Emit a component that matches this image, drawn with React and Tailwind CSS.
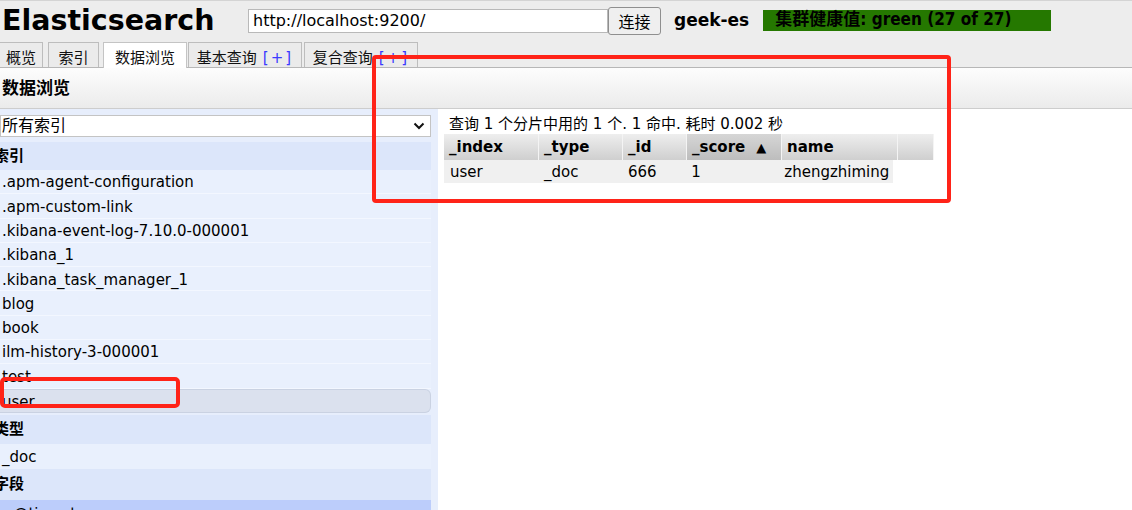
import React from 'react';

const indices = [
    '.apm-agent-configuration',
    '.apm-custom-link',
    '.kibana-event-log-7.10.0-000001',
    '.kibana_1',
    '.kibana_task_manager_1',
    'blog',
    'book',
    'ilm-history-3-000001',
    'test',
];

const tabs = [
    { label: '概览', w: 'w-[43px]', ml: '' },
    { label: '索引', w: 'w-[51px]', ml: 'ml-[5px]' },
    { label: '数据浏览', w: 'w-[84px]', ml: 'ml-[4px]', active: true },
    { label: '基本查询', w: 'w-[114px]', ml: 'ml-[1px]', plus: true },
    { label: '复合查询', w: 'w-[114px]', ml: 'ml-[2px]', plus: true },
];

const columns = [
    { label: '_index', w: 'w-[95px]', pl: 'pl-[6px]' },
    { label: '_type', w: 'w-[84px]', pl: 'pl-[6px]' },
    { label: '_id', w: 'w-[64px]', pl: 'pl-[7px]' },
    { label: '_score', w: 'w-[95px]', pl: 'pl-[7px]', sorted: true },
    { label: 'name', w: 'w-[116px]', pl: 'pl-[6px]' },
    { label: '', w: 'w-[36px]', pl: 'pl-[6px]' },
];

const row = ['user', '_doc', '666', '1', 'zhengzhiming'];

const SectionHeader = ({ children, h }) => (
    <div className={`${h} flex items-center bg-[#dce6fa] -ml-[6px] text-[15px] font-bold text-black`}>
        {children}
    </div>
);

const App = () => {
    return (
        <div className="relative w-[1132px] h-[510px] overflow-hidden bg-white font-['DejaVu_Sans','Noto_Sans_CJK_SC',sans-serif] text-[15px] text-[#111]">
            {/* top bar */}
            <div className="h-[42px] bg-[#ededed] border-t border-[#d4d4d4] flex items-center">
                <div className="pl-[2px] w-[248px] text-[28.5px] font-bold text-black leading-none">
                    Elasticsearch
                </div>
                <div className="w-[360px] h-[24px] bg-white border border-[#b9b9b9] flex items-center pl-[4px] text-[16px] text-black -mt-[2px]">
                    http://localhost:9200/
                </div>
                <button className="w-[53px] h-[28px] bg-[#efefef] border border-[#8f8f8f] rounded-[3px] text-[16px] text-black font-['Noto_Sans_CJK_SC',sans-serif] -mt-[2px]">
                    连接
                </button>
                <div className="ml-[13px] text-[17px] font-bold text-black -mt-[2px]">geek-es</div>
                <div className="ml-[14px] w-[288px] h-[21px] bg-[#257800] flex items-center pl-[12px] text-[17px] font-bold text-black -mt-[3px] font-['DejaVu_Sans_Condensed','Noto_Sans_CJK_SC',sans-serif]">
                    集群健康值: green (27 of 27)
                </div>
            </div>

            {/* tabs */}
            <div className="h-[26px] bg-[#ededed] border-b border-[#b7b7b7] flex items-end">
                {tabs.map((t) => (
                    <div
                        key={t.label}
                        className={`${t.w} ${t.ml} h-[25px] flex items-center justify-center border border-b-0 text-[15px] ${
                            t.active
                                ? 'bg-white border-[#c4c4c4] h-[26px] -mb-[1px]'
                                : 'bg-[#ebebeb] border-[#bdbdbd]'
                        } ${t.label === '概览' ? 'border-l-0' : ''}`}
                    >
                        <span className="pt-[6px]">{t.label}</span>
                        {t.plus && <span className="ml-[6px] pt-[6px] text-[#3a3aff] tracking-[2px]">[+]</span>}
                    </div>
                ))}
            </div>

            {/* sub header */}
            <div className="h-[41px] bg-gradient-to-b from-[#fdfdfd] to-[#ebebeb] border-b border-[#cdcdcd] flex items-center pl-[2px] pt-[1px] text-[17px] font-bold text-black">
                数据浏览
            </div>

            {/* main */}
            <div className="flex">
                <div className="w-[438px] h-[402px] bg-[#e7eefc] pr-[7px] pt-[6px] overflow-hidden">
                    <div className="h-[22px] bg-white border border-[#c4c4c4] flex items-center justify-between pl-[1px] pr-[5px] text-[16px] text-black">
                        <span>所有索引</span>
                        <svg width="12" height="8" viewBox="0 0 12 8">
                            <path d="M1.5 1.5 L6 6 L10.5 1.5" fill="none" stroke="#111" strokeWidth="2" />
                        </svg>
                    </div>
                    <div className="mt-[5px]">
                        <SectionHeader h="h-[28px]">索引</SectionHeader>
                        {indices.map((name) => (
                            <div
                                key={name}
                                className="h-[24.3px] flex items-center pl-[2px] pt-[2px] bg-[#e9f0fd] border-b border-[#f3f7ff] text-black"
                            >
                                {name}
                            </div>
                        ))}
                        <div className="h-[24px] flex items-center pl-[2px] pt-[3px] bg-[#dbe1ee] border border-l-0 border-[#cad2e2] rounded-r-[6px] text-black">
                            user
                        </div>
                        <SectionHeader h="h-[29px] mt-[2px]">类型</SectionHeader>
                        <div className="h-[25px] flex items-center pl-[2px] pt-[2px] bg-[#e9f0fd] text-black">_doc</div>
                        <SectionHeader h="h-[31px]">字段</SectionHeader>
                        <div className="h-[24px] flex items-center justify-between bg-[#bccdfb] text-black pr-[6px]">
                            <span className="flex items-center pt-[6px]">
                                <span className="text-[11px] mr-[5px]">▶</span>@timestamp
                            </span>
                            <span className="text-[#2b4cff] text-[11px] pt-[10px]">?</span>
                        </div>
                    </div>
                </div>

                {/* results */}
                <div className="flex-1 pl-[6px] pt-[5px]">
                    <div className="pl-[5px] h-[20px] flex items-center text-[15px] text-black">
                        查询 1 个分片中用的 1 个. 1 命中. 耗时 0.002 秒
                    </div>
                    <div className="flex">
                        {columns.map((c) => (
                            <div
                                key={c.label || 'blank'}
                                className={`${c.w} h-[26px] flex items-center pl-[5px] pt-[1px] border-r border-[#f4f4f4] font-bold text-[15px] text-black bg-gradient-to-b ${
                                    c.sorted ? 'from-[#d6d6d6] to-[#bdbdbd]' : 'from-[#eeeeee] to-[#cfcfcf]'
                                }`}
                            >
                                {c.label}
                                {c.sorted && <span className="ml-[11px] text-[13px]">▲</span>}
                            </div>
                        ))}
                    </div>
                    <div className="flex bg-[#f0f0f0] w-[449px] h-[23px]">
                        {row.map((v, i) => (
                            <div key={i} className={`${columns[i].w} ${columns[i].pl} flex items-center pt-[2px] text-black`}>
                                {v}
                            </div>
                        ))}
                    </div>
                </div>
            </div>

            {/* annotation boxes */}
            <div className="absolute left-[372px] top-[55px] w-[579px] h-[148px] border-[4px] border-[#ff2318] rounded-[4px] pointer-events-none" />
            <div className="absolute left-[0px] top-[377px] w-[180px] h-[31px] border-[4px] border-[#ff2318] rounded-[5px] pointer-events-none" />
        </div>
    );
};

export default App;
